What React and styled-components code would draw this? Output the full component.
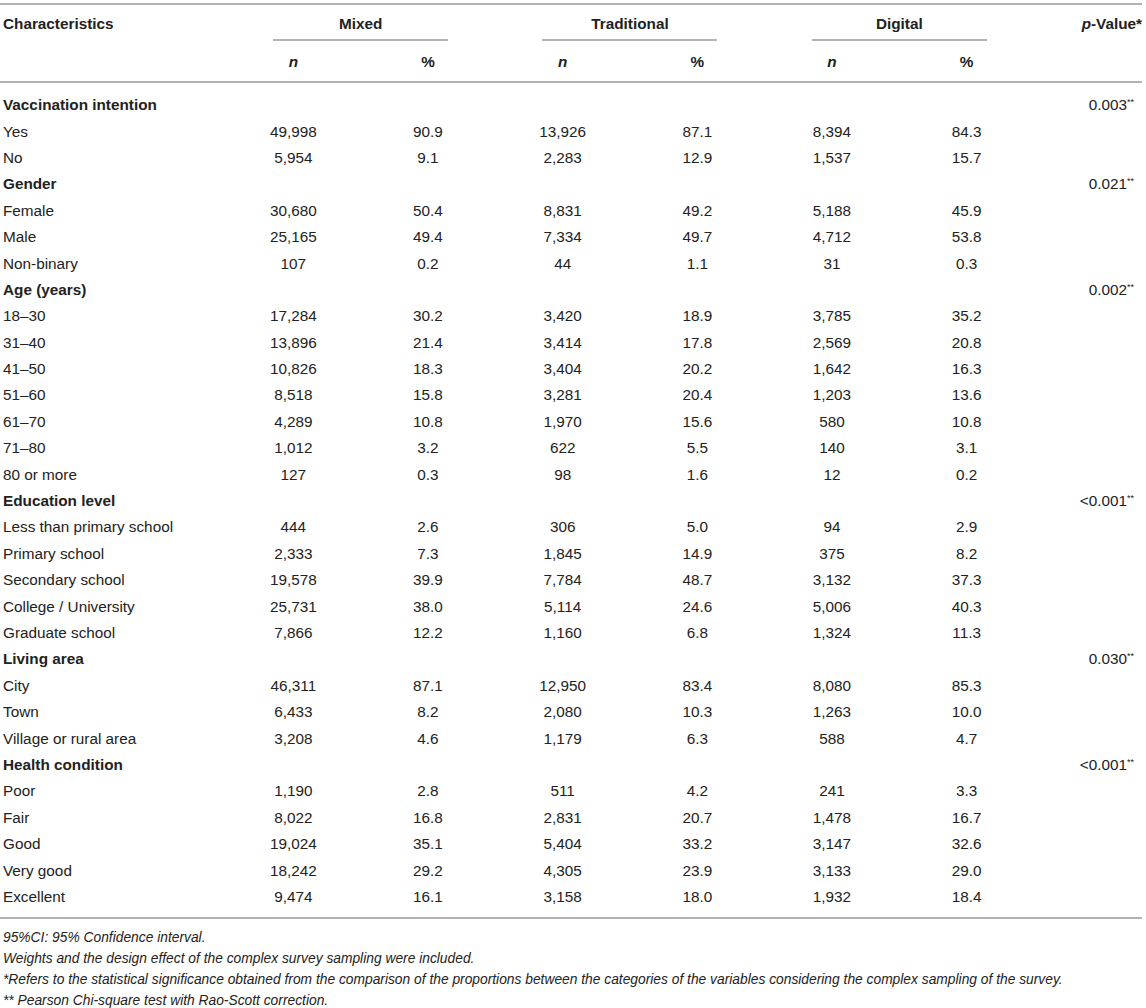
import React from 'react';
import styled, { createGlobalStyle } from 'styled-components';

const GlobalStyle = createGlobalStyle`
  body {
    margin: 0;
    background: #fff;
    font-family: "Liberation Sans", Arial, Helvetica, sans-serif;
    color: #222;
  }
`;

const COLS = '226px repeat(6, 1fr) 108px';

const Table = styled.div`
  width: 1142px;
  padding-top: 3px;
`;

const Head = styled.div`
  display: grid;
  grid-template-columns: ${COLS};
  border-top: 2px solid #b3b3b3;
  border-bottom: 2px solid #b3b3b3;
  font-size: 15.3px;
  font-weight: bold;
  line-height: 20px;
`;

const HeadLabel = styled.div`
  grid-row: 1;
  padding: 9px 0 0 3px;
`;

const HeadP = styled.div`
  grid-row: 1;
  grid-column: 8;
  text-align: right;
  padding-top: 9px;
`;

const Group = styled.div`
  grid-row: 1;
  grid-column: span 2;
  display: flex;
  justify-content: center;
`;

const GroupTitle = styled.div`
  width: 175px;
  text-align: center;
  padding: 9px 0 5px;
  border-bottom: 2px solid #b3b3b3;
`;

const SubHead = styled.div`
  grid-row: 2;
  grid-column: ${(p) => p.col};
  text-align: center;
  padding: 11px 0 9px;
  font-style: ${(p) => (p.italic ? 'italic' : 'normal')};
`;

const Body = styled.div`
  padding: 9px 0 7px;
  border-bottom: 2px solid #b3b3b3;
`;

const Row = styled.div`
  display: grid;
  grid-template-columns: ${COLS};
  height: 26.4px;
  align-items: center;
  font-size: 15.3px;
  font-weight: ${(p) => (p.category ? 'bold' : 'normal')};
`;

const Label = styled.div`
  padding-left: 3px;
  white-space: nowrap;
`;

const Num = styled.div`
  text-align: center;
`;

const PVal = styled.div`
  grid-column: 8;
  text-align: right;
  padding-right: 8px;
  font-weight: normal;
  sup {
    font-size: 9px;
    vertical-align: 5px;
    line-height: 0;
  }
`;

const Notes = styled.div`
  padding: 8px 0 0 3px;
  font-size: 13.8px;
  font-style: italic;
  line-height: 21px;
  color: #222;
  white-space: nowrap;
`;

const sections = [
  {
    title: 'Vaccination intention',
    p: '0.003',
    rows: [
      ['Yes', '49,998', '90.9', '13,926', '87.1', '8,394', '84.3'],
      ['No', '5,954', '9.1', '2,283', '12.9', '1,537', '15.7'],
    ],
  },
  {
    title: 'Gender',
    p: '0.021',
    rows: [
      ['Female', '30,680', '50.4', '8,831', '49.2', '5,188', '45.9'],
      ['Male', '25,165', '49.4', '7,334', '49.7', '4,712', '53.8'],
      ['Non-binary', '107', '0.2', '44', '1.1', '31', '0.3'],
    ],
  },
  {
    title: 'Age (years)',
    p: '0.002',
    rows: [
      ['18–30', '17,284', '30.2', '3,420', '18.9', '3,785', '35.2'],
      ['31–40', '13,896', '21.4', '3,414', '17.8', '2,569', '20.8'],
      ['41–50', '10,826', '18.3', '3,404', '20.2', '1,642', '16.3'],
      ['51–60', '8,518', '15.8', '3,281', '20.4', '1,203', '13.6'],
      ['61–70', '4,289', '10.8', '1,970', '15.6', '580', '10.8'],
      ['71–80', '1,012', '3.2', '622', '5.5', '140', '3.1'],
      ['80 or more', '127', '0.3', '98', '1.6', '12', '0.2'],
    ],
  },
  {
    title: 'Education level',
    p: '<0.001',
    rows: [
      ['Less than primary school', '444', '2.6', '306', '5.0', '94', '2.9'],
      ['Primary school', '2,333', '7.3', '1,845', '14.9', '375', '8.2'],
      ['Secondary school', '19,578', '39.9', '7,784', '48.7', '3,132', '37.3'],
      ['College / University', '25,731', '38.0', '5,114', '24.6', '5,006', '40.3'],
      ['Graduate school', '7,866', '12.2', '1,160', '6.8', '1,324', '11.3'],
    ],
  },
  {
    title: 'Living area',
    p: '0.030',
    rows: [
      ['City', '46,311', '87.1', '12,950', '83.4', '8,080', '85.3'],
      ['Town', '6,433', '8.2', '2,080', '10.3', '1,263', '10.0'],
      ['Village or rural area', '3,208', '4.6', '1,179', '6.3', '588', '4.7'],
    ],
  },
  {
    title: 'Health condition',
    p: '<0.001',
    rows: [
      ['Poor', '1,190', '2.8', '511', '4.2', '241', '3.3'],
      ['Fair', '8,022', '16.8', '2,831', '20.7', '1,478', '16.7'],
      ['Good', '19,024', '35.1', '5,404', '33.2', '3,147', '32.6'],
      ['Very good', '18,242', '29.2', '4,305', '23.9', '3,133', '29.0'],
      ['Excellent', '9,474', '16.1', '3,158', '18.0', '1,932', '18.4'],
    ],
  },
];

const groups = ['Mixed', 'Traditional', 'Digital'];

export default function App() {
  return (
    <>
      <GlobalStyle />
      <Table>
        <Head>
          <HeadLabel>Characteristics</HeadLabel>
          {groups.map((g) => (
            <Group key={g}>
              <GroupTitle>{g}</GroupTitle>
            </Group>
          ))}
          <HeadP>
            <i>p</i>-Value*
          </HeadP>
          {groups.map((g, i) => (
            <React.Fragment key={g}>
              <SubHead col={2 + i * 2} italic>
                n
              </SubHead>
              <SubHead col={3 + i * 2}>%</SubHead>
            </React.Fragment>
          ))}
        </Head>
        <Body>
          {sections.map((s) => (
            <React.Fragment key={s.title}>
              <Row category>
                <Label>{s.title}</Label>
                <PVal>
                  {s.p}
                  <sup>**</sup>
                </PVal>
              </Row>
              {s.rows.map((r) => (
                <Row key={r[0]}>
                  <Label>{r[0]}</Label>
                  {r.slice(1).map((v, i) => (
                    <Num key={i}>{v}</Num>
                  ))}
                </Row>
              ))}
            </React.Fragment>
          ))}
        </Body>
        <Notes>
          <div>95%CI: 95% Confidence interval.</div>
          <div>Weights and the design effect of the complex survey sampling were included.</div>
          <div>
            *Refers to the statistical significance obtained from the comparison of the proportions
            between the categories of the variables considering the complex sampling of the survey.
          </div>
          <div>** Pearson Chi-square test with Rao-Scott correction.</div>
        </Notes>
      </Table>
    </>
  );
}
